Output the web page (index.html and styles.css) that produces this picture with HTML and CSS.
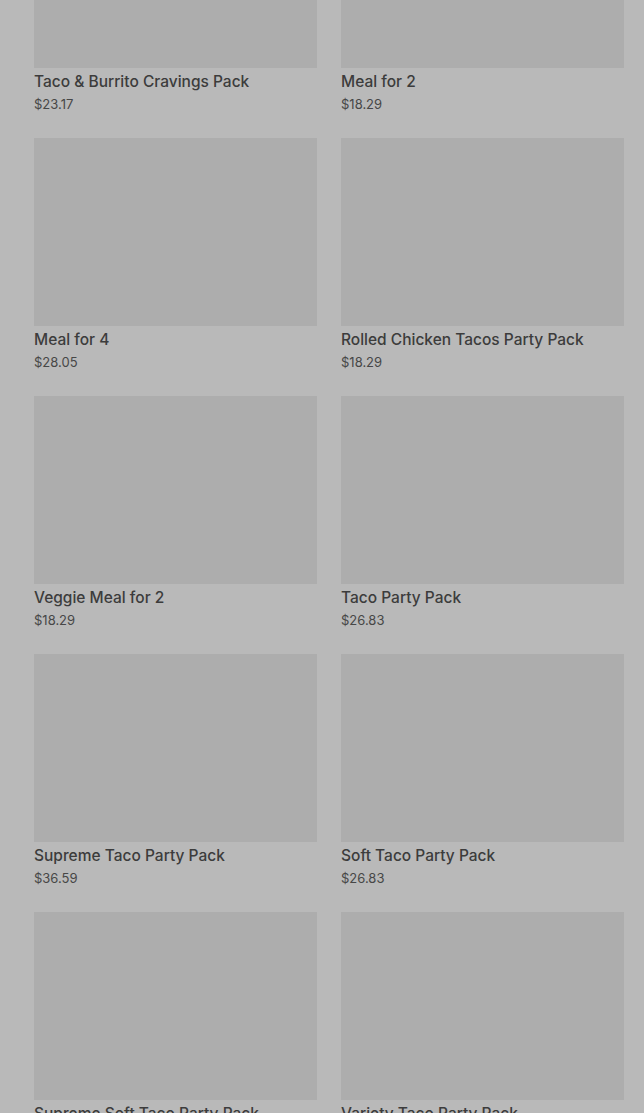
FILE: index.html
```html
<!DOCTYPE html>
<html lang="en">
<head>
    <meta charset="UTF-8">
    <title>Party Packs</title>
    <link rel="stylesheet" href="styles.css">
</head>
<body>
    <div class="page">
        <div class="product-grid">
            <div class="product">
                <div class="product-image"></div>
                <div class="product-name">Taco &amp; Burrito Cravings Pack</div>
                <div class="product-price">$23.17</div>
            </div>
            <div class="product">
                <div class="product-image"></div>
                <div class="product-name">Meal for 2</div>
                <div class="product-price">$18.29</div>
            </div>
            <div class="product">
                <div class="product-image"></div>
                <div class="product-name">Meal for 4</div>
                <div class="product-price">$28.05</div>
            </div>
            <div class="product">
                <div class="product-image"></div>
                <div class="product-name">Rolled Chicken Tacos Party Pack</div>
                <div class="product-price">$18.29</div>
            </div>
            <div class="product">
                <div class="product-image"></div>
                <div class="product-name">Veggie Meal for 2</div>
                <div class="product-price">$18.29</div>
            </div>
            <div class="product">
                <div class="product-image"></div>
                <div class="product-name">Taco Party Pack</div>
                <div class="product-price">$26.83</div>
            </div>
            <div class="product">
                <div class="product-image"></div>
                <div class="product-name">Supreme Taco Party Pack</div>
                <div class="product-price">$36.59</div>
            </div>
            <div class="product">
                <div class="product-image"></div>
                <div class="product-name">Soft Taco Party Pack</div>
                <div class="product-price">$26.83</div>
            </div>
            <div class="product">
                <div class="product-image"></div>
                <div class="product-name">Supreme Soft Taco Party Pack</div>
                <div class="product-price">$36.59</div>
            </div>
            <div class="product">
                <div class="product-image"></div>
                <div class="product-name">Variety Taco Party Pack</div>
                <div class="product-price">$26.83</div>
            </div>
        </div>
    </div>
</body>
</html>
```

FILE: styles.css
```css
html, body {
    margin: 0;
    height: 100%;
    overflow: hidden;
}
body {
    font-family: Inter, Roboto, "Liberation Sans", sans-serif;
    background-color: #b9b9b9;
    color: #3b3b3b;
}
.page {
    padding: 0 20px 0 34px;
}
.product-grid {
    display: grid;
    grid-template-columns: 283px 283px;
    column-gap: 24px;
    row-gap: 24px;
    margin-top: -120px;
}
.product-image {
    height: 188px;
    background-color: #adadad;
}
.product-name {
    margin-top: 4px;
    font-size: 15.5px;
    line-height: 20px;
    font-weight: 500;
    color: #3c3c3c;
}
.product-price {
    margin-top: 2px;
    font-size: 13px;
    line-height: 20px;
    color: #474747;
}
```
